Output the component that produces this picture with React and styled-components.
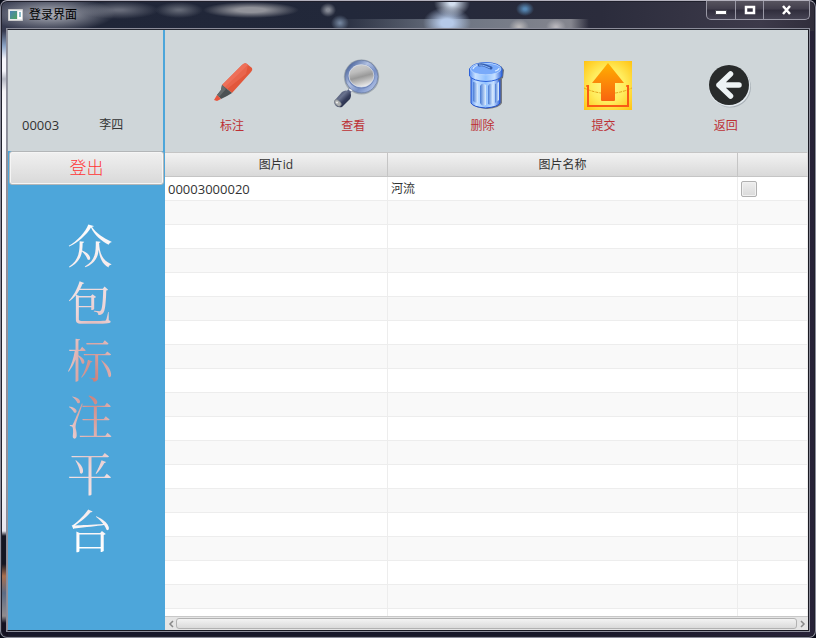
import React from "react";
import styled, { createGlobalStyle, css } from "styled-components";

const GlobalStyle = createGlobalStyle`
  * { box-sizing: border-box; }
  body {
    margin: 0;
    background: #090b18;
    font-family: "Open Sans", "Noto Sans CJK SC", sans-serif;
    font-size: 13px;
    color: #333;
  }
  button { font-family: inherit; }
`;

const WindowFrame = styled.main`
  display: flex;
  flex-direction: column;
  height: 100vh;
  padding: 1px 6px 6px;
  border: 1px solid #8b8c9b;
  border-top-color: #b3b1bd;
  border-radius: 7px;
  box-shadow: inset 0 0 0 1px #20202c;
  background:
    radial-gradient(ellipse 14px 24px at 180px 4px, #c4d5ec00, transparent),
    radial-gradient(ellipse 18px 14px at 451px 2px, #d3dfef 15%, transparent),
    radial-gradient(ellipse 24px 16px at 446px 22px, #b5c9e8 25%, transparent),
    radial-gradient(ellipse 9px 7px at 524px 8px, #5688b5 15%, transparent),
    radial-gradient(ellipse 10px 8px at 518px 26px, #b8b6b8 10%, transparent),
    radial-gradient(ellipse 10px 8px at 555px 26px, #b8b6bc 10%, transparent),
    radial-gradient(ellipse 8px 7px at 327px 9px, #858994 20%, transparent),
    radial-gradient(ellipse 9px 8px at 339px 22px, #708199 10%, transparent),
    radial-gradient(ellipse 24px 8px at 178px 9px, #626774 10%, transparent),
    radial-gradient(ellipse 48px 8px at 250px 9px, #92939a 30%, transparent),
    radial-gradient(ellipse 64px 18px at 50px 13px, #a5a8b2 10%, transparent),
    radial-gradient(ellipse 40px 9px at 118px 9px, #666a78 10%, transparent),
    linear-gradient(90deg, transparent 330px, #6c7482 450px, #85868f 570px, transparent 588px) 0 18px / 100% 11px no-repeat,
    linear-gradient(90deg, #373b50, #202638 100px, #22283a 350px, #2b2c3c 600px, #3d3a4a 760px, #302d3b) top / 100% 30px no-repeat,
    linear-gradient(#373b50 0 30px, #8ca5c7 45px, #f5f5fb 58px 70px, #b5b8c3 78px, #f5f4f7 90px, #faf9fd 110px, #f4f3f5 480px, #e8e6ef 530px, #151522 535px 563px, #aa704f 575px, #5d6b83 592px, #918c8e 615px, #151222 622px) left / 7px 100% no-repeat,
    linear-gradient(90deg, #17172a, #171728 70%, #272238);
`;

const TitleBar = styled.header`
  display: flex;
  flex: 0 0 27px;
  align-items: flex-start;
  justify-content: space-between;
  padding-left: 1px;
`;

const Title = styled.h1`
  display: flex;
  align-items: center;
  gap: 6px;
  margin: 3px 0 0;
  font-size: 12px;
  font-weight: 400;
  line-height: 20px;
  color: #000;
`;

const Controls = styled.div`
  display: flex;
  height: 19px;
  margin-top: -1px;
  margin-right: -1px;
  border: 1px solid #9998a5;
  border-top: 0;
  border-radius: 0 0 5px 5px;
  background: linear-gradient(#57545f, #413e4c 45%, #302d3c 50%, #454353);
`;

const ControlButton = styled.button`
  display: flex;
  align-items: center;
  justify-content: center;
  width: ${({ $wide }) => ($wide ? 46 : 28)}px;
  padding: 0;
  border: 0;
  border-left: ${({ $first }) => ($first ? "0" : "1px solid #9998a5")};
  background: transparent;
`;

const Client = styled.div`
  display: flex;
  flex: 1;
  min-height: 0;
  border: 1px solid #92939d;
  border-right-color: #191922;
  border-bottom-color: #191922;
  border-top-color: #23252f;
  outline: 1px solid #8b8c99;
  background: #cfd6d9;
`;

const Sidebar = styled.aside`
  display: flex;
  flex: 0 0 157px;
  flex-direction: column;
  background: #4da6da;
`;

const UserPanel = styled.div`
  display: flex;
  align-items: flex-end;
  gap: 40px;
  height: 121px;
  margin-right: 2px;
  padding: 0 14px 16px;
  background: #cfd6d9;
  line-height: 20px;
`;

const UserName = styled.span`
  font-size: 12px;
`;

const LogoutButton = styled.button`
  height: 34px;
  margin: 0 1px;
  padding: 0;
  border: 1px solid #b3b6b8;
  border-radius: 3px;
  background: linear-gradient(#f0f0f0, #d9d9d9);
  box-shadow: inset 0 0 0 1px #f5f5f5;
  color: #ff3535;
  font-size: 17px;
  font-weight: 300;
  line-height: 28px;
`;

const Brand = styled.h2`
  display: flex;
  flex-direction: column;
  align-items: center;
  margin: 30px 0 0 7px;
  background: radial-gradient(ellipse 62px 165px at 52% 50%, #c87872, #ecd4d7 50%, #ffffff 100%);
  background-clip: text;
  -webkit-background-clip: text;
  color: transparent;
  font-family: "Noto Serif CJK SC", "Noto Sans CJK SC", serif;
  font-size: 46px;
  font-weight: 400;
  line-height: 57px;
`;

const Content = styled.section`
  display: flex;
  flex: 1;
  flex-direction: column;
  min-width: 0;
`;

const Toolbar = styled.nav`
  display: grid;
  flex: 0 0 122px;
  grid-template-columns: 121fr 129fr 121fr 122fr 102fr;
  align-items: start;
  padding: 31px 0 0 47px;
`;

const ToolButton = styled.button`
  justify-self: start;
  width: 48px;
  padding: 0;
  border: 0;
  background: transparent;
  color: #bd3034;
  font-size: 12px;
  line-height: 18px;

  svg { display: block; overflow: visible; }
`;

const ToolLabel = styled.span`
  display: block;
  margin-top: 6px;
  padding-right: 8px;
`;

const TableViewport = styled.div`
  flex: 1;
  min-height: 0;
  overflow: hidden;
  background: #fff;
`;

const ImageTable = styled.table`
  width: 100%;
  border-collapse: separate;
  border-spacing: 0;
  table-layout: fixed;
`;

const Column = styled.col`
  width: ${({ $width }) => $width || "auto"};
`;

const cell = css`
  height: 24px;
  padding: 0 3px;
  overflow: hidden;
  line-height: 22px;
  text-align: left;
  white-space: nowrap;
`;

const HeaderCell = styled.th`
  ${cell}
  height: 25px;
  padding-top: 1px;
  border: solid #c5c5c5;
  border-width: 1px 1px 1px 0;
  background: linear-gradient(#f2f2f2, #d9d9d9);
  font-size: 12px;
  font-weight: 400;
  text-align: center;

  &:last-child { border-right-color: #ddd; }
`;

const Row = styled.tr`
  background: #fff;
  &:nth-child(even) { background: #f9f9f9; }
`;

const Cell = styled.td`
  ${cell}
  border: solid #ededed;
  border-width: 0 1px 1px 0;
  font-size: ${({ $name }) => ($name ? 12 : 13)}px;
`;

const RowCheck = styled.input`
  display: block;
  appearance: none;
  width: 16px;
  height: 16px;
  margin: 0;
  border: 1px solid #b0b0b0;
  border-radius: 2px;
  background: linear-gradient(#eee, #dadada);
  box-shadow: inset 0 0 0 1px #f1f1f1;

  &:checked { background: #4da6da; }
`;

const ScrollBar = styled.div`
  display: flex;
  flex: 0 0 14px;
  align-items: center;
  border-top: 1px solid #c8c8c8;
  background: #e5e5e5;
`;

const ScrollArrow = styled.button`
  display: flex;
  align-items: center;
  justify-content: center;
  width: 11px;
  height: 12px;
  padding: 0;
  border: 0;
  background: transparent;
`;

const ScrollThumb = styled.div`
  flex: 1;
  height: 11px;
  border: 1px solid #b2b2b2;
  border-radius: 3px;
  background: linear-gradient(#f3f3f3, #dadada);
`;

function AppIcon() {
  return (
    <svg width="15" height="12" viewBox="0 0 15 12" aria-hidden="true">
      <defs>
        <linearGradient id="appGreen" x2="1" y2="1">
          <stop stopColor="#4d82b8" /><stop offset="1" stopColor="#4ea35e" />
        </linearGradient>
      </defs>
      <path fill="#e9eaec" stroke="#ccc" d="M.5.5h14v11H.5z" />
      <path fill="url(#appGreen)" d="M2 2h7v8H2z" />
      <path fill="#fff" d="M10 2h4v8h-4z" />
      <path fill="#8cbccb" d="M11 3h2v5h-2z" />
    </svg>
  );
}

function PenIcon() {
  return (
    <svg width="48" height="50" viewBox="0 0 48 50" aria-hidden="true">
      <path fill="#e2573b" d="M10 24 30 4q3-3 5-1l5 4q1 2-1 4L20 32z" />
      <path fill="#ee7059" d="M10 24 30 4q3-3 5-1l1 1-21 24z" />
      <path fill="#e9654c" d="m36 4-2 9-19 15-2-2z" />
      <path fill="#4b5153" d="m10 24 10 8-5 3-6 3-4-4 4-5z" />
      <path fill="#656b6c" d="m10 24 4 4-7 8-2-2 4-5z" />
      <path fill="#e9553e" d="m5 34 4 4-4 2-3-1z" />
    </svg>
  );
}

function SearchIcon() {
  return (
    <svg width="48" height="50" viewBox="0 0 48 50" aria-hidden="true">
      <defs>
        <linearGradient id="ring" x1=".1" x2=".9" y1=".2" y2=".9">
          <stop stopColor="#536ca2" /><stop offset=".35" stopColor="#b2c1e2" />
          <stop offset=".65" stopColor="#7890c5" /><stop offset="1" stopColor="#b4c5ea" />
        </linearGradient>
        <linearGradient id="glass" x1=".3" x2=".6" y2="1">
          <stop stopColor="#cfcfcf" /><stop offset=".3" stopColor="#bdbdbd" />
          <stop offset=".55" stopColor="#999" /><stop offset="1" stopColor="#eee" />
        </linearGradient>
        <linearGradient id="handle" x2="1" y2="1">
          <stop stopColor="#343d5a" /><stop offset=".4" stopColor="#69728e" />
          <stop offset=".6" stopColor="#333b59" /><stop offset="1" stopColor="#1e2439" />
        </linearGradient>
      </defs>
      <ellipse cx="28.5" cy="16" rx="17.7" ry="17.5" fill="#a0a9b1" />
      <ellipse cx="28.5" cy="15.6" rx="16.5" ry="16.3" fill="url(#ring)" stroke="#65789f" strokeWidth=".7" />
      <ellipse cx="28.2" cy="15.2" rx="13.5" ry="12.3" fill="#7188bb" />
      <ellipse cx="28.4" cy="14.8" rx="12.5" ry="11.2" fill="url(#glass)" stroke="#dde4ef" strokeWidth=".7" />
      <path stroke="#566184" strokeWidth="4" d="m18 28-3 4" />
      <path stroke="#e9edf2" strokeWidth="2" d="m16 28 3 2" />
      <path fill="url(#handle)" d="M9 31q4-3 8 0 2 3 0 7l-8 8q-3 1-6-1-3-3-1-6z" />
      <ellipse cx="4.8" cy="42" rx="4" ry="2.5" fill="#aeb0b0" stroke="#777d88" strokeWidth=".7" transform="rotate(45 4.8 42)" />
      <circle cx="4" cy="41.5" r="1" fill="#eee" />
    </svg>
  );
}

function TrashIcon() {
  return (
    <svg width="48" height="50" viewBox="0 0 48 50" aria-hidden="true">
      <defs>
        <linearGradient id="can">
          <stop stopColor="#5d92f2" /><stop offset=".18" stopColor="#c7e1ff" />
          <stop offset=".5" stopColor="#91c1ff" /><stop offset=".78" stopColor="#c7e0ff" />
          <stop offset="1" stopColor="#3467db" />
        </linearGradient>
        <linearGradient id="flute">
          <stop stopColor="#487bd5" /><stop offset="1" stopColor="#e1f1ff" />
        </linearGradient>
      </defs>
      <path fill="#74777e" d="M10 18h30v24q-2 5-15 6-12-1-15-5z" />
      <path fill="url(#can)" stroke="#2455cf" d="M9 16h29v26q-2 4-14.5 5Q11 46 9 42z" />
      <path fill="url(#flute)" d="M11 21q4 0 5 3v17q-2 2-5-1z" />
      <path fill="url(#flute)" d="M18 25q2-4 6-1v20q-4 2-6-2z" />
      <path fill="url(#flute)" d="M26 25q2-4 5-1v18q-2 3-5 1z" />
      <path fill="url(#flute)" d="m33 23 4-2v18l-4 3z" />
      <path fill="#646d7e" d="m39 5 3 4-1 8-5 3z" />
      <path fill="url(#can)" stroke="#2b62da" d="M7.5 8Q10 2 24 1.5 38 2 40 8v7q-4 5-16 5.5Q11 20 7.5 15z" />
      <ellipse cx="23.7" cy="8" rx="15.3" ry="5.8" fill="#79aafa" stroke="#c2dcff" strokeWidth=".7" />
      <path fill="none" stroke="#d8eaff" strokeWidth="1.2" d="M11 8q1-3 6-4m16 6q4-1 4-3" />
      <path fill="none" stroke="#355eae" strokeWidth="3" strokeLinecap="round" d="M17 4q4-1 7 1l5 2" />
      <path fill="none" stroke="#8db7f8" d="M17 4q4 0 6 1l5 2" />
    </svg>
  );
}

function SubmitIcon() {
  return (
    <svg width="48" height="50" viewBox="0 0 48 50" aria-hidden="true">
      <defs>
        <radialGradient id="tile" r=".7">
          <stop stopColor="#fff991" /><stop offset=".5" stopColor="#ffec5c" />
          <stop offset="1" stopColor="#ffc313" />
        </radialGradient>
        <linearGradient id="arrow" x2="0" y2="1">
          <stop stopColor="#ffb000" /><stop offset="1" stopColor="#f86410" />
        </linearGradient>
      </defs>
      <path fill="url(#tile)" d="M0 0h48v49H0z" />
      <path fill="none" stroke="#e4a51c" strokeDasharray="3 1" d="M0 27q24 11 48 0" />
      <path fill="none" stroke="#f95c14" strokeWidth="2" d="M4 24v21h40V24" />
      <path fill="none" stroke="#f98a14" d="M2.5 24v2M42.5 24v2" />
      <path fill="url(#arrow)" d="m24 2 16 20h-9v17q0 1-1 1H18q-1 0-1-1V22H8z" />
    </svg>
  );
}

function BackIcon() {
  return (
    <svg width="48" height="50" viewBox="0 0 48 50" aria-hidden="true">
      <circle cx="24.5" cy="26" r="20.5" fill="#a9b1b7" />
      <circle cx="23.5" cy="25" r="20.7" fill="#e1e8ed" />
      <circle cx="23" cy="24" r="20" fill="#282b2b" />
      <path fill="none" stroke="#edf3f5" strokeWidth="5.5" strokeLinecap="round" strokeLinejoin="round" d="M24.5 13 13 24l11.500 11M13 24h20" />
    </svg>
  );
}

function WindowControls() {
  return (
    <Controls>
      <ControlButton $first aria-label="最小化">
        <svg width="12" height="10"><path fill="#fff" stroke="#4b4a53" d="M.5 5.500h11v4H.5z" /></svg>
      </ControlButton>
      <ControlButton aria-label="最大化">
        <svg width="12" height="10"><path fill="none" stroke="#fff" strokeWidth="2.5" d="M2 2h8v6H2z" /></svg>
      </ControlButton>
      <ControlButton $wide aria-label="关闭">
        <svg width="12" height="10"><path fill="none" stroke="#fff" strokeWidth="2.5" d="m2 1 7 8m0-8L2 9" /></svg>
      </ControlButton>
    </Controls>
  );
}

const tools = [
  { label: "标注", Icon: PenIcon },
  { label: "查看", Icon: SearchIcon },
  { label: "删除", Icon: TrashIcon },
  { label: "提交", Icon: SubmitIcon },
  { label: "返回", Icon: BackIcon },
];

const images = [{ id: "00003000020", name: "河流" }];
const rows = [...images, ...Array(18).fill(null)];

export default function App() {
  return (
    <>
      <GlobalStyle />
      <WindowFrame>
        <TitleBar>
          <Title><AppIcon />登录界面</Title>
          <WindowControls />
        </TitleBar>
        <Client>
          <Sidebar>
            <UserPanel>
              <span>00003</span>
              <UserName>李四</UserName>
            </UserPanel>
            <LogoutButton>登出</LogoutButton>
            <Brand>
              {[..."众包标注平台"].map((character) => <span key={character}>{character}</span>)}
            </Brand>
          </Sidebar>
          <Content>
            <Toolbar>
              {tools.map(({ label, Icon }) => (
                <ToolButton key={label}>
                  <Icon />
                  <ToolLabel>{label}</ToolLabel>
                </ToolButton>
              ))}
            </Toolbar>
            <TableViewport>
              <ImageTable>
                <colgroup><Column $width="223px" /><Column /><Column $width="70px" /></colgroup>
                <thead>
                  <tr>
                    <HeaderCell>图片id</HeaderCell>
                    <HeaderCell>图片名称</HeaderCell>
                    <HeaderCell aria-label="选择" />
                  </tr>
                </thead>
                <tbody>
                  {rows.map((image, index) => (
                    <Row key={index}>
                      <Cell>{image?.id}</Cell>
                      <Cell $name>{image?.name}</Cell>
                      <Cell>{image && <RowCheck type="checkbox" aria-label={`选择 ${image.name}`} />}</Cell>
                    </Row>
                  ))}
                </tbody>
              </ImageTable>
            </TableViewport>
            <ScrollBar>
              <ScrollArrow aria-label="向左滚动">
                <svg width="6" height="8"><path fill="none" stroke="#888" strokeWidth="1.5" d="M5 1 2 4l3 3" /></svg>
              </ScrollArrow>
              <ScrollThumb />
              <ScrollArrow aria-label="向右滚动">
                <svg width="6" height="8"><path fill="none" stroke="#888" strokeWidth="1.5" d="m1 1 3 3-3 3" /></svg>
              </ScrollArrow>
            </ScrollBar>
          </Content>
        </Client>
      </WindowFrame>
    </>
  );
}
